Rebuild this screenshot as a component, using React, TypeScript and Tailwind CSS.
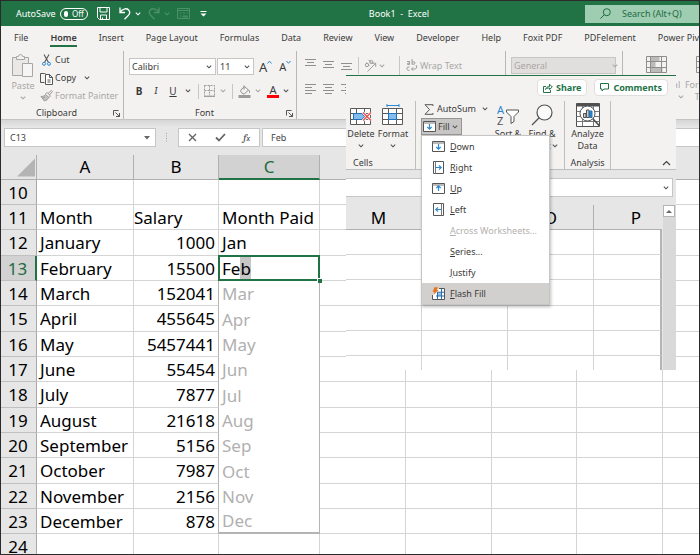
import type { ReactNode } from "react";
import clsx from "clsx";

const TABS = [
  "File",
  "Home",
  "Insert",
  "Page Layout",
  "Formulas",
  "Data",
  "Review",
  "View",
  "Developer",
  "Help",
  "Foxit PDF",
  "PDFelement",
  "Power Pivot",
];

interface SheetRow {
  row: number;
  month: string;
  salary: string;
  paid: string;
}

const ROWS: SheetRow[] = [
  { row: 10, month: "", salary: "", paid: "" },
  { row: 11, month: "Month", salary: "Salary", paid: "Month Paid" },
  { row: 12, month: "January", salary: "1000", paid: "Jan" },
  { row: 13, month: "February", salary: "15500", paid: "Feb" },
  { row: 14, month: "March", salary: "152041", paid: "Mar" },
  { row: 15, month: "April", salary: "455645", paid: "Apr" },
  { row: 16, month: "May", salary: "5457441", paid: "May" },
  { row: 17, month: "June", salary: "55454", paid: "Jun" },
  { row: 18, month: "July", salary: "7877", paid: "Jul" },
  { row: 19, month: "August", salary: "21618", paid: "Aug" },
  { row: 20, month: "September", salary: "5156", paid: "Sep" },
  { row: 21, month: "October", salary: "7987", paid: "Oct" },
  { row: 22, month: "November", salary: "2156", paid: "Nov" },
  { row: 23, month: "December", salary: "878", paid: "Dec" },
  { row: 24, month: "", salary: "", paid: "" },
];

const FILL_ITEMS = [
  { label: "Down", icon: <FillIcon rotate={0} /> },
  { label: "Right", icon: <FillIcon rotate={270} /> },
  { label: "Up", icon: <FillIcon rotate={180} /> },
  { label: "Left", icon: <FillIcon rotate={90} /> },
  { label: "Across Worksheets...", disabled: true },
  { label: "Series..." },
  { label: "Justify" },
  { label: "Flash Fill", icon: <FlashFillIcon />, active: true },
];

function Chevron({ className = "text-[#555]" }: { className?: string }) {
  return (
    <svg width="6" height="4" viewBox="0 0 6 4" className={clsx("shrink-0", className)} aria-hidden="true">
      <path d="M0.8 0.6 3 2.8 5.2 0.6" fill="none" stroke="currentColor" strokeWidth="1.1" />
    </svg>
  );
}

function Launcher() {
  return (
    <svg width="7" height="7" viewBox="0 0 7 7" fill="none" stroke="#555" strokeWidth="1" aria-hidden="true">
      <path d="M0.5 5.5v-5h5M2.5 2.5l4 4M6.5 3v3.5H3" />
    </svg>
  );
}

function FillIcon({ rotate }: { rotate: number }) {
  const sideways = rotate === 90 || rotate === 270;
  return (
    <svg width="13" height="13" viewBox="0 0 13 13" fill="none" aria-hidden="true">
      {sideways ? (
        <>
          <path d="M1.5 0.5h10v12h-10z" fill="#fff" stroke="#555" />
          <path d={rotate === 270 ? "M3.5 0.5v12" : "M9.5 0.5v12"} stroke="#777" />
        </>
      ) : (
        <>
          <path d="M0.5 1.5h12v10h-12z" fill="#fff" stroke="#555" />
          <path d="M0.5 3h12" stroke="#777" />
        </>
      )}
      <path
        d="M6.5 4v5M4.3 7l2.2 2.2L8.7 7"
        stroke="#2b88d0"
        strokeWidth="1.2"
        transform={`rotate(${rotate} 6.5 6.5)`}
      />
    </svg>
  );
}

function FlashFillIcon() {
  return (
    <svg width="13" height="13" viewBox="0 0 13 13" fill="none" aria-hidden="true">
      <path d="M7 1.5h5.500v11h-12V8" fill="#fff" stroke="#555" />
      <path d="M5 5.500h4.500v3.500H5z" fill="#8cc4f0" />
      <path d="M5.500 5.200h7M4 9h8.500M5.500 5v7.500M9.500 1.500v11" stroke="#2b6cab" />
      <path d="M2.500 0.300h3.500L4.600 2.900h2L1.400 8.300 2.600 5H0.600z" fill="#e8731b" />
    </svg>
  );
}

function TextLines({ widths, align }: { widths: number[]; align: "left" | "center" | "right" }) {
  return (
    <svg width="11" height="11" viewBox="0 0 11 11" stroke="#8f8f8f" strokeWidth="1" aria-hidden="true">
      {widths.map((w, i) => {
        const x = align === "left" ? 0 : align === "right" ? 11 - w : (11 - w) / 2;
        return <path key={i} d={`M${x} ${i * 3 + 1.5}h${w}`} />;
      })}
    </svg>
  );
}

function TitleBar() {
  return (
    <header className="relative flex h-[25px] shrink-0 items-center bg-[#217346] pl-[15px] text-[9px] text-white">
      <label htmlFor="autosave">AutoSave</label>
      <button
        id="autosave"
        type="button"
        role="switch"
        aria-checked="false"
        className="ml-1 flex h-[12px] w-[28px] items-center gap-1 rounded-full border border-white px-[3px] text-[8px] leading-none"
      >
        <span className="size-[6px] rounded-full bg-white" />
        Off
      </button>
      <button type="button" aria-label="Save" className="ml-[9px]">
        <svg width="13" height="13" viewBox="0 0 13 13" fill="none" stroke="currentColor">
          <path d="M0.5 0.5h12v12h-10l-2-2zM3 0.5v4.5h7V0.5M3.5 12.5V8h6v4.5M5.5 10.5v2" />
        </svg>
      </button>
      <button type="button" aria-label="Undo" className="ml-[9px] flex items-center gap-[4px]">
        <svg width="12" height="13" viewBox="0 0 12 13" fill="none" stroke="currentColor" strokeWidth="1.3">
          <path d="M1 0.5v5h5M1.2 5.3C3 2 7.4 0.6 9.6 3s1 4.2-.6 5.8L5.5 12.3" />
        </svg>
        <Chevron className="text-white" />
      </button>
      <button type="button" aria-label="Redo" disabled className="ml-[7px] flex items-center gap-[4px] text-[#4d9169]">
        <svg width="12" height="13" viewBox="0 0 12 13" fill="none" stroke="currentColor" strokeWidth="1.3">
          <path d="M11 0.5v5H6M10.8 5.3C9 2 4.6 0.6 2.4 3s-1 4.2.6 5.8l3.5 3.5" />
        </svg>
        <Chevron className="text-[#4d9169]" />
      </button>
      <button type="button" aria-label="Form" disabled className="ml-[7px] text-[#4d9169]">
        <svg width="13" height="12" viewBox="0 0 13 12" fill="none" stroke="currentColor">
          <path d="M0.5 0.5h12v10h-12zM0.5 2.5h12M2.5 5h2M6 5h2M9.5 5h1.5M2.5 8h2M6 8h4.5v1H6z" />
        </svg>
      </button>
      <button type="button" aria-label="Customize toolbar" className="ml-[10px]">
        <svg width="7" height="6" viewBox="0 0 7 6" fill="currentColor">
          <path d="M0.5 0h6v1h-6zM0.5 2.5h6l-3 3z" />
        </svg>
      </button>
      <h1 className="absolute inset-x-0 text-center">
        <span className="ml-[98px]">Book1&nbsp; -&nbsp; Excel</span>
      </h1>
      <div className="relative ml-auto flex h-[18px] w-[114px] items-center bg-[#9fcdb2] pl-[15px] text-[#1e6b41]">
        <svg width="11" height="11" viewBox="0 0 11 11" fill="none" stroke="currentColor" className="shrink-0" aria-hidden="true">
          <circle cx="6.8" cy="4.2" r="3.5" />
          <path d="M4.2 6.8 0.4 10.6" />
        </svg>
        <input
          aria-label="Search"
          placeholder="Search (Alt+Q)"
          className="ml-[11px] w-full min-w-0 bg-transparent outline-none placeholder:text-[#1e6b41]"
        />
      </div>
    </header>
  );
}

function Divider({ className }: { className?: string }) {
  return <span className={clsx("w-px shrink-0 bg-[#c8c6c4]", className)} />;
}

function ClipboardGroup() {
  return (
    <section className="flex w-[123px] shrink-0 flex-col border-r border-[#b9b7b5]">
      <div className="flex flex-1 pl-[10px]">
        <button type="button" disabled className="flex w-[24px] flex-col items-center pt-[3px] text-[#a9a7a5]">
          <svg width="22" height="24" viewBox="0 0 22 24" fill="none" stroke="#a9a7a5" aria-hidden="true">
            <path d="M4.500 3.500h-4v18h10V9.500h6v-6h-4" fill="#e9e8e7" />
            <path d="M4.5 5.500h8v-3h-2a2 2 0 0 0-4 0h-2z" fill="#f3f2f1" />
            <path d="M10.500 9.500h10v13h-10z" fill="#f5f5f5" />
          </svg>
          <span className="mt-[1px] leading-[13px]">Paste</span>
          <Chevron className="mt-[4px] text-[#a9a7a5]" />
        </button>
        <div className="ml-[5px] flex flex-col">
          <button type="button" className="flex h-[18px] items-center gap-[2px]">
            <svg width="13" height="12" viewBox="0 0 13 12" fill="none" aria-hidden="true">
              <path d="M4 0.500 8.500 8.500M9 0.500 4.500 8.500" stroke="#555" strokeWidth="1.1" />
              <circle cx="4" cy="9.800" r="1.500" stroke="#2b88d0" />
              <circle cx="9" cy="9.800" r="1.500" stroke="#2b88d0" />
            </svg>
            Cut
          </button>
          <button type="button" className="flex h-[18px] items-center gap-[2px]">
            <svg width="13" height="13" viewBox="0 0 13 13" fill="none" stroke="#555" aria-hidden="true">
              <path d="M4.500 10.500h-4v-9h4l2 1" />
              <path d="M5.500 2.500h4l3 3v7h-7zM9.500 2.500v3h3M7.500 8h3M7.500 10h3" fill="#fff" />
            </svg>
            Copy
            <Chevron className="ml-[6px] text-[#555]" />
          </button>
          <button type="button" disabled className="flex h-[18px] items-center gap-[2px] whitespace-nowrap text-[#a9a7a5]">
            <svg width="13" height="12" viewBox="0 0 13 12" fill="none" stroke="#9d9b99" aria-hidden="true">
              <path d="M1 6.500c2 0 3.500-.5 4.500-2l3.500 3c-1 1.500-2.500 3-4.500 3.500z" fill="#c4c2c0" />
              <path d="M5.500 4 7 2.500 10.500 6 9 7.500M8 3.500 11.500 0.500l1 1L9.500 5M3 8l2-1" />
            </svg>
            Format Painter
          </button>
        </div>
      </div>
      <div className="flex h-[12px] items-center justify-between pr-[3px] pl-[35px]">
        <h2>Clipboard</h2>
        <Launcher />
      </div>
    </section>
  );
}

function FontGroup() {
  return (
    <section className="flex w-[173px] shrink-0 flex-col border-r border-[#b9b7b5]">
      <div className="flex items-center pt-[7px] pl-[5px]">
        <div className="relative flex items-center">
          <select aria-label="Font" className="h-[17px] w-[87px] appearance-none border border-[#c8c6c4] bg-white pl-[2px] leading-none">
            <option>Calibri</option>
          </select>
          <Chevron className="pointer-events-none absolute right-[4px] text-[#555]" />
        </div>
        <div className="relative ml-[1px] flex items-center">
          <select aria-label="Font size" className="h-[17px] w-[37px] appearance-none border border-[#c8c6c4] bg-white pl-[2px] leading-none">
            <option>11</option>
          </select>
          <Chevron className="pointer-events-none absolute right-[4px] text-[#555]" />
        </div>
        <button type="button" aria-label="Increase font size" className="ml-[5px] flex text-[13px] leading-[14px]">
          A
          <svg width="5" height="5" viewBox="0 0 5 5" fill="none" stroke="#2b88d0">
            <path d="M0.500 3.500 2.500 1.200 4.500 3.500" />
          </svg>
        </button>
        <button type="button" aria-label="Decrease font size" className="ml-[7px] flex text-[11px] leading-[14px]">
          A
          <svg width="5" height="5" viewBox="0 0 5 5" fill="none" stroke="#2b88d0">
            <path d="M0.500 1 2.500 3.300 4.500 1" />
          </svg>
        </button>
      </div>
      <div className="flex flex-1 items-center pl-[9px] text-[10px]">
        <button type="button" className="w-[12px] font-bold">B</button>
        <button type="button" className="ml-[5px] w-[12px] font-serif italic">I</button>
        <button type="button" className="ml-[5px] w-[12px] underline">U</button>
        <Chevron className="ml-[6px] text-[#555]" />
        <Divider className="ml-[7px] h-[15px]" />
        <button type="button" aria-label="Borders" disabled className="ml-[5px] flex items-center gap-[5px]">
          <svg width="11" height="12" viewBox="0 0 11 12" fill="none" stroke="#9d9b99" aria-hidden="true">
            <path d="M0.500 0.500h10v10M0.500 0.500v10M5.500 0.500v10M0.500 5.500h10" strokeDasharray="2 1" />
            <path d="M0 11.300h11" strokeWidth="1.300" />
          </svg>
          <Chevron className="text-[#a9a7a5]" />
        </button>
        <Divider className="ml-[6px] h-[15px]" />
        <button type="button" aria-label="Fill color" disabled className="ml-[5px] flex items-center gap-[4px]">
          <svg width="13" height="13" viewBox="0 0 13 13" fill="none" stroke="#8f8d8b" aria-hidden="true">
            <path d="M3 4.800 6.500 1.500l4 3.500-4 3.800H5L2.600 6.500zM6 0.500v4M10.800 5c1 1.500 1 2.500.3 3" />
            <path d="M0.500 11.500h12" strokeWidth="3" stroke="#9d9b99" />
          </svg>
          <Chevron className="text-[#a9a7a5]" />
        </button>
        <button type="button" aria-label="Font color" className="ml-[6px] flex items-center gap-[4px]">
          <span className="w-[12px] border-b-[3px] border-[#f00] text-center text-[11px] leading-[10px]">A</span>
          <Chevron />
        </button>
      </div>
      <div className="flex h-[12px] items-center justify-between pr-[3px] pl-[71px]">
        <h2>Font</h2>
        <Launcher />
      </div>
    </section>
  );
}

function AlignmentGroup() {
  return (
    <section className="flex w-[209px] shrink-0 flex-col gap-[9px] border-r border-[#b9b7b5] pt-[6px] pl-[8px] text-[#a9a7a5]">
      <div className="flex h-[17px] items-center">
        <div className="flex gap-[7px]">
          <button type="button" aria-label="Top align" disabled className="-mt-1">
            <TextLines widths={[11, 7, 11]} align="center" />
          </button>
          <button type="button" aria-label="Middle align" disabled>
            <TextLines widths={[11, 7, 11]} align="center" />
          </button>
          <button type="button" aria-label="Bottom align" disabled className="-mb-1">
            <TextLines widths={[11, 7, 11]} align="center" />
          </button>
        </div>
        <Divider className="ml-[6px] h-[17px]" />
        <button type="button" aria-label="Orientation" disabled className="ml-[5px] flex items-center gap-[2px]">
          <svg width="13" height="13" viewBox="0 0 13 13" fill="none" stroke="#a09e9c" aria-hidden="true">
            <path d="M3.500 12.500 11.500 4.500M8 4.200h3.700v3.700" />
            <circle cx="3" cy="6" r="1.700" />
            <path d="M2.500 3.500 5.200 6.500M4.500 0.800 8 4.500" />
            <circle cx="7.300" cy="3" r="1.600" />
          </svg>
          <Chevron className="text-[#a9a7a5]" />
        </button>
        <Divider className="ml-[14px] h-[20px]" />
        <button type="button" disabled className="ml-[6px] flex items-center gap-[2px] whitespace-nowrap">
          <svg width="12" height="13" viewBox="0 0 12 13" fill="none" stroke="#a09e9c" aria-hidden="true">
            <path d="M1 2.500h2.500v3H1.500q-1-1.500 2-1.500M6 0v5.500M6 3q3-1 3 1t-3 1M3.500 8Q0.800 7.500 0.800 9.500t2.700 2" />
            <path d="M10 6q2 2-.5 4H5.500M7.200 8.300 5.500 10l1.700 1.700" />
          </svg>
          Wrap Text
        </button>
      </div>
      <div className="flex gap-[7px]">
        <button type="button" aria-label="Align left" disabled>
          <TextLines widths={[11, 7, 11, 7]} align="left" />
        </button>
        <button type="button" aria-label="Center" disabled>
          <TextLines widths={[11, 7, 11, 7]} align="center" />
        </button>
        <button type="button" aria-label="Align right" disabled>
          <TextLines widths={[11, 7, 11, 7]} align="right" />
        </button>
      </div>
    </section>
  );
}

function TableStyleIcon() {
  return (
    <svg width="21" height="17" viewBox="0 0 21 17" fill="none" stroke="#8f8d8b" aria-hidden="true">
      <path d="M4.500 1h9v4h-9zM4.500 5h5v6h-5zM4.500 11h12v5h-12z" fill="#bdbbb9" stroke="none" />
      <path d="M0.500 0.500h20v16h-20zM0.500 5.500h20M0.500 11.500h20M4.500 0.500v16M15.500 0.500v16" />
    </svg>
  );
}

function Ribbon() {
  return (
    <div className="shrink-0 border-b border-[#c6c4c2] bg-[#f3f2f1] text-[9px] leading-[12px] text-[#3b3a39]">
      <nav className="flex h-[25px] items-start gap-[22px] overflow-hidden pt-[5px] pl-[13px] leading-[13px] whitespace-nowrap">
        {TABS.map((tab) => (
          <a
            key={tab}
            href={`#${tab}`}
            className={clsx("shrink-0", tab === "Home" && "border-b-2 border-[#217346] pb-[1px] font-semibold")}
          >
            {tab}
          </a>
        ))}
      </nav>
      <div className="flex h-[68px] overflow-hidden">
        <ClipboardGroup />
        <FontGroup />
        <AlignmentGroup />
        <section className="w-[117px] shrink-0 border-r border-[#b9b7b5] pt-[6px] pl-[5px]">
          <div className="relative flex items-center">
            <select
              aria-label="Number format"
              disabled
              className="h-[17px] w-[105px] appearance-none border border-[#c8c6c4] bg-[#e1dfdd] pl-[2px] leading-none text-[#a9a7a5]"
            >
              <option>General</option>
            </select>
            <Chevron className="pointer-events-none absolute right-[4px] text-[#a9a7a5]" />
          </div>
        </section>
        <section className="flex shrink-0 pt-[5px] pl-[6px] text-[#a9a7a5]">
          <button type="button" disabled className="flex w-[54px] flex-col items-center">
            <TableStyleIcon />
            <span className="mt-[6px]">Conditional</span>
            <span className="flex items-center gap-[3px]">
              Formatting <Chevron className="text-[#a9a7a5]" />
            </span>
          </button>
          <button type="button" disabled className="flex w-[46px] flex-col items-center">
            <TableStyleIcon />
            <span className="mt-[6px] whitespace-nowrap">Format as</span>
            <span>Table</span>
          </button>
        </section>
      </div>
    </div>
  );
}

function FormulaBar() {
  return (
    <div className="flex shrink-0 items-center bg-gradient-to-b from-[#d6d6d6] to-[#e6e6e6] to-20% py-[8px] pl-[3px] text-[9px] text-[#444]">
      <div className="relative flex items-center">
        <input aria-label="Name box" defaultValue="C13" className="h-[19px] w-[152px] border border-[#c6c6c6] bg-white pl-[5px]" />
        <svg width="6" height="4" viewBox="0 0 6 4" fill="#666" className="absolute right-[6px]" aria-hidden="true">
          <path d="M0 0h6L3 3.500z" />
        </svg>
      </div>
      <svg width="2" height="9" viewBox="0 0 2 9" fill="#a0a0a0" className="mx-[10px]" aria-hidden="true">
        <path d="M0 0h1v1H0zM0 2.500h1v1H0zM0 5h1v1H0zM0 7.500h1v1H0z" />
      </svg>
      <div className="flex h-[19px] w-[82px] items-center justify-between border border-[#c6c6c6] bg-white px-[9px]">
        <button type="button" aria-label="Cancel">
          <svg width="9" height="9" viewBox="0 0 9 9" stroke="#666" strokeWidth="1.400">
            <path d="M1 1l7 7M8 1 1 8" />
          </svg>
        </button>
        <button type="button" aria-label="Enter">
          <svg width="11" height="9" viewBox="0 0 11 9" fill="none" stroke="#666" strokeWidth="1.800">
            <path d="M1 4.500 4 7.500 10 1" />
          </svg>
        </button>
        <button type="button" aria-label="Insert function" className="font-serif text-[11px] leading-none italic">
          f<span className="text-[8px]">x</span>
        </button>
      </div>
      <input aria-label="Formula" defaultValue="Feb" className="ml-[2px] h-[19px] min-w-0 flex-1 border border-r-0 border-[#c6c6c6] bg-white pl-[8px]" />
    </div>
  );
}

function PaidCell({ row, paid }: { row: number; paid: string }) {
  if (row === 13) {
    return (
      <td className="relative border-r border-b border-[#d4d4d4] p-0 pt-px pl-[3px]">
        Fe<span className="bg-[#c6c6c6]">b</span>
        <span className="absolute -inset-px border-2 border-[#217346]" />
        <span className="absolute -right-[3px] -bottom-[3px] size-[5px] border-t border-l border-white bg-[#217346]" />
      </td>
    );
  }
  const suggested = row > 13 && row < 24;
  return (
    <td
      className={clsx(
        "border-r p-0 pt-px pl-[3px]",
        suggested ? "border-[#b4b4b4] text-[#b0b0b0]" : "border-b border-[#d4d4d4]",
        row === 23 && "border-b-2",
      )}
    >
      {paid}
    </td>
  );
}

function Sheet() {
  return (
    <table className="w-full shrink-0 table-fixed border-separate border-spacing-0 bg-white text-[17px] leading-[22px] text-black">
      <colgroup>
        <col className="w-[36px]" />
        <col className="w-[97px]" />
        <col className="w-[85px]" />
        <col className="w-[101px]" />
        <col className="w-[86px]" />
        <col className="w-[86px]" />
        <col className="w-[85px]" />
        <col className="w-[86px]" />
        <col />
      </colgroup>
      <thead>
        <tr className="h-[25px] bg-[#e6e6e6]">
          <th aria-label="Select all" className="border-r border-b border-[#b0b0b0] p-0 align-bottom">
            <svg width="19" height="19" viewBox="0 0 19 19" className="mb-[2px] ml-auto block pr-px" aria-hidden="true">
              <path d="M19 0v19H0z" fill="#b4b4b4" />
            </svg>
          </th>
          <th className="border-r border-b border-[#b0b0b0] p-0 font-normal">A</th>
          <th className="border-r border-b border-[#b0b0b0] p-0 font-normal">B</th>
          <th className="border-r border-b-2 border-r-[#b0b0b0] border-b-[#217346] bg-[#d2d2d2] p-0 font-normal text-[#1e6b41]">C</th>
          <th colSpan={5} className="border-b border-[#b0b0b0] p-0" />
        </tr>
      </thead>
      <tbody>
        {ROWS.map(({ row, month, salary, paid }) => (
          <tr key={row} className={row % 3 === 0 ? "h-[26px]" : "h-[25px]"}>
            <th
              scope="row"
              className={clsx(
                "border-b p-0 pt-px pr-[1px] text-center font-normal",
                row === 13
                  ? "border-r-2 border-r-[#217346] border-b-[#c0c0c0] bg-[#d2d2d2] text-[#1e6b41]"
                  : "border-r border-r-[#a8a8a8] border-b-[#c0c0c0] bg-[#e6e6e6]",
              )}
            >
              {row}
            </th>
            <td className="border-r border-b border-[#d4d4d4] p-0 pt-px pl-[3px]">{month}</td>
            <td
              className={clsx(
                "border-r border-b border-[#d4d4d4] p-0 pt-px pr-[3px]",
                row === 11 ? "text-left" : "text-right",
                row > 13 && row < 24 && "border-r-[#b4b4b4]",
              )}
            >
              {salary}
            </td>
            <PaidCell row={row} paid={paid} />
            <td className="border-r border-b border-[#d4d4d4] p-0" />
            <td className="border-r border-b border-[#d4d4d4] p-0" />
            <td className="border-r border-b border-[#d4d4d4] p-0" />
            <td className="border-r border-b border-[#d4d4d4] p-0" />
            <td className="border-b border-[#d4d4d4] p-0" />
          </tr>
        ))}
      </tbody>
    </table>
  );
}

function BigButton({ className, icon, children }: { className: string; icon: ReactNode; children: ReactNode }) {
  return (
    <button type="button" className={clsx("flex shrink-0 flex-col items-center whitespace-nowrap", className)}>
      <span className="flex h-[27px] items-center">{icon}</span>
      {children}
    </button>
  );
}

function CellsIcon({ kind }: { kind: "delete" | "format" }) {
  return (
    <svg width="22" height="22" viewBox="0 0 22 22" fill="none" aria-hidden="true">
      <path d="M0.500 4.500h20v16h-20z" fill="#fff" />
      <path d="M0.500 4.500h20v16h-20zM0.500 9.500h20M0.500 15.500h20M6.500 4.500v16M14.500 4.500v16" stroke="#5a5a5a" />
      {kind === "delete" ? (
        <>
          <path d="M3.500 9.500h8l3 3-3 3h-8z" fill="#83bdf0" stroke="#2272b9" />
          <path d="M13 8.500l8 8M21 8.500l-8 8" stroke="#f3f2f1" strokeWidth="3" />
          <path d="M13 8.500l8 8M21 8.500l-8 8" stroke="#e8524a" strokeWidth="1.300" />
        </>
      ) : (
        <>
          <path d="M6.500 9.500h8v6h-8z" fill="#83bdf0" stroke="#2272b9" />
          <path d="M5 1.500h12M5 0v3M17 0v3" stroke="#2b88d0" />
        </>
      )}
    </svg>
  );
}

function FillMenu() {
  return (
    <div
      role="menu"
      className="absolute top-full left-0 z-10 w-[129px] border border-[#c6c6c6] bg-white shadow-[1px_2px_3px_rgba(0,0,0,0.25)]"
    >
      {FILL_ITEMS.map(({ label, icon, disabled, active }) => (
        <button
          key={label}
          type="button"
          role="menuitem"
          disabled={disabled}
          className={clsx(
            "flex h-[21px] w-full items-center text-left",
            active && "bg-[#d2d0ce]",
            disabled && "text-[#b3b0ad]",
          )}
        >
          <span className="flex w-[28px] justify-end pr-[5px]">{icon}</span>
          <span className="whitespace-nowrap">
            <span className="underline">{label[0]}</span>
            {label.slice(1)}
          </span>
        </button>
      ))}
    </div>
  );
}

function SecondRibbon() {
  return (
    <div className="flex h-[69px] shrink-0 border-b border-[#c0bebc]">
      <section className="flex w-[70px] shrink-0 flex-col border-r border-[#c0bebc]">
        <div className="flex flex-1">
          <BigButton className="w-[30px]" icon={<CellsIcon kind="delete" />}>
            Delete
            <Chevron className="mt-[4px] text-[#555]" />
          </BigButton>
          <BigButton className="w-[34px]" icon={<CellsIcon kind="format" />}>
            Format
            <Chevron className="mt-[4px] text-[#555]" />
          </BigButton>
        </div>
        <h2 className="pl-[7px]">Cells</h2>
      </section>
      <section className="flex w-[149px] shrink-0 border-r border-[#c0bebc] pl-[5px]">
        <div className="w-[70px] shrink-0">
          <button type="button" className="flex h-[16px] items-center gap-[3px] pl-[3px]">
            <svg width="10" height="11" viewBox="0 0 10 11" fill="none" stroke="#555" aria-hidden="true">
              <path d="M9 2V0.700H1L5.500 5.500 1 10.300h8V9" />
            </svg>
            AutoSum
            <Chevron className="ml-[3px] text-[#555]" />
          </button>
          <div className="relative">
            <button
              type="button"
              aria-expanded="true"
              className="mt-[1px] flex h-[17px] w-[41px] items-center gap-[2px] border border-[#979593] bg-[#c8c6c4] pl-px"
            >
              <FillIcon rotate={0} />
              Fill
              <Chevron />
            </button>
            <FillMenu />
          </div>
        </div>
        <BigButton
          className="w-[34px]"
          icon={
            <svg width="23" height="22" viewBox="0 0 23 22" fill="none" aria-hidden="true">
              <text x="0" y="10" fontSize="11" fill="#2b88d0">A</text>
              <text x="0" y="21" fontSize="11" fill="#555">Z</text>
              <path d="M9.500 6h12v2l-4.500 4.500v5l-3 2v-7L9.500 8z" stroke="#555" fill="#fff" />
            </svg>
          }
        >
          <span>Sort &amp;</span>
          <span>Filter</span>
        </BigButton>
        <BigButton
          className="w-[34px]"
          icon={
            <svg width="22" height="22" viewBox="0 0 22 22" fill="none" stroke="#555" aria-hidden="true">
              <circle cx="13.500" cy="8.500" r="7.500" strokeWidth="1.200" fill="#fafafa" />
              <path d="M8.200 13.800 1 21" strokeWidth="1.300" />
            </svg>
          }
        >
          <span>Find &amp;</span>
          <span className="flex items-center gap-[2px]">
            Select <Chevron />
          </span>
        </BigButton>
      </section>
      <section className="flex w-[46px] shrink-0 flex-col items-center border-r border-[#c0bebc]">
        <BigButton
          className="w-[46px] flex-1"
          icon={
            <svg width="24" height="24" viewBox="0 0 24 24" fill="none" stroke="#505050" aria-hidden="true">
              <path d="M0.500 0.500h23v23H0.500z" fill="#fff" />
              <path d="M0.500 1h23v2h-23z" fill="#505050" />
              <path d="M0.500 8.500h23M0.500 13.500h23M0.500 18.500h23M6.500 3v20M17.500 3v20" stroke="#777" />
              <circle cx="11.500" cy="10.500" r="7.500" fill="#fff" />
              <path d="M7.500 10.500h2.500v4H7.500zM10.500 7h2.500v7.500h-2.500z" fill="#ccc" />
              <path d="M13.500 8h2.500v6.500h-2.500z" fill="#2b88d0" stroke="#2272b9" />
              <path d="M17 16l6.500 7" strokeWidth="1.600" />
            </svg>
          }
        >
          <span>Analyze</span>
          <span>Data</span>
        </BigButton>
        <h2>Analysis</h2>
      </section>
      <button type="button" aria-label="Collapse ribbon" className="mt-auto mr-[5px] mb-[3px] ml-auto">
        <svg width="9" height="6" viewBox="0 0 9 6" fill="none" stroke="#444" strokeWidth="1.200">
          <path d="M1 5 4.500 1.500 8 5" />
        </svg>
      </button>
    </div>
  );
}

const INSET_COLUMNS = [
  { name: "M", className: "pr-[10px]" },
  { name: "N" },
  { name: "O" },
  { name: "P", last: true, className: "pl-[16px]" },
];

function SecondSheet() {
  return (
    <div className="flex min-h-0 flex-1 bg-[#e6e6e6]">
      <table className="w-[316px] table-fixed border-separate border-spacing-0 self-start text-[17px] leading-[22px] text-black">
        <colgroup>
          <col className="w-[76px]" />
          <col className="w-[86px]" />
          <col className="w-[86px]" />
          <col />
        </colgroup>
        <thead>
          <tr className="h-[25px]">
            {INSET_COLUMNS.map(({ name, last, className }) => (
              <th key={name} className={clsx("border-b border-[#b0b0b0] pt-px pb-0 font-normal", !last && "border-r", className)}>
                {name}
              </th>
            ))}
          </tr>
        </thead>
        <tbody>
          {[1, 2, 3, 4, 5, 6].map((n) => (
            <tr key={n} className={clsx("bg-white", n === 3 ? "h-[26px]" : "h-[25px]")}>
              {INSET_COLUMNS.map(({ name, last }) => (
                <td
                  key={name}
                  className={clsx("border-b border-[#d4d4d4] p-0", last ? "border-r-2 border-r-[#b4b4b4]" : "border-r")}
                />
              ))}
            </tr>
          ))}
        </tbody>
      </table>
      <div className="ml-auto w-[13px] bg-[#d9d9d9]">
        <button type="button" aria-label="Scroll up" className="flex h-[12px] w-[12px] items-center justify-center border border-[#b4b4b4] bg-white">
          <svg width="6" height="3" viewBox="0 0 6 3" fill="#666">
            <path d="M0 3h6L3 0z" />
          </svg>
        </button>
      </div>
    </div>
  );
}

function InsetWindow() {
  return (
    <aside className="absolute top-[74px] right-[23px] flex h-[295px] w-[330px] flex-col overflow-hidden border-t border-[#217346] bg-[#f3f2f1] text-[9px] leading-[12px] text-[#3b3a39]">
      <div className="flex h-[25px] shrink-0 items-start justify-end gap-[7px] pt-[3px] pr-[8px] font-bold text-[#217346]">
        <button type="button" className="flex h-[17px] items-center gap-[3px] rounded-sm border border-[#e1dfdd] bg-white px-[5px]">
          <svg width="10" height="10" viewBox="0 0 10 10" fill="none" stroke="currentColor" aria-hidden="true">
            <path d="M3 3.500H0.500v6h7V7M2.500 6.500c.5-2 2-3 4-3V1.200L9.300 4 6.500 6.500V5c-1.800 0-3 .3-4 1.500z" />
          </svg>
          Share
        </button>
        <button type="button" className="flex h-[17px] items-center gap-[4px] rounded-sm border border-[#e1dfdd] bg-white px-[5px]">
          <svg width="9" height="9" viewBox="0 0 9 9" fill="none" stroke="currentColor" aria-hidden="true">
            <path d="M0.500 0.500h8v5.500H4L2 8V6H0.500z" />
          </svg>
          Comments
        </button>
      </div>
      <SecondRibbon />
      <div className="shrink-0 bg-[#e6e6e6] py-[8px]">
        <div className="relative mr-[3px] flex items-center">
          <input aria-label="Formula bar" className="h-[19px] w-full border border-l-0 border-[#c6c6c6] bg-white" />
          <Chevron className="absolute right-[4px] text-[#555]" />
        </div>
      </div>
      <SecondSheet />
    </aside>
  );
}

export default function App() {
  return (
    <main className="relative flex h-screen flex-col overflow-hidden border border-[#2b2b2b] bg-white font-['Noto_Sans','Open_Sans',sans-serif]">
      <TitleBar />
      <Ribbon />
      <FormulaBar />
      <Sheet />
      <InsetWindow />
    </main>
  );
}
